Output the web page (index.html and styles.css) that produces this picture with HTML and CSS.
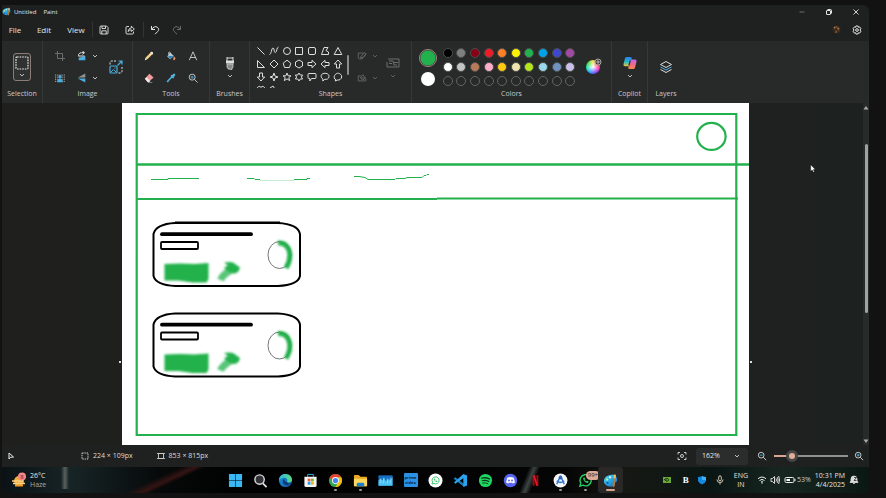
FILE: index.html
```
<!DOCTYPE html>
<html lang="en">
<head>
<meta charset="utf-8">
<title>Untitled - Paint</title>
<link rel="stylesheet" href="styles.css">
</head>
<body>
<svg class="defs" aria-hidden="true">
  <defs>
    <linearGradient id="palA" x1="0" y1="0" x2="1" y2="1"><stop offset="0" stop-color="#4fe0f5"/><stop offset=".5" stop-color="#28a7e6"/><stop offset="1" stop-color="#1767b8"/></linearGradient>
    <linearGradient id="edgeA" x1="0" y1="0" x2="1" y2="1"><stop offset="0" stop-color="#1c9be0"/><stop offset="1" stop-color="#0f56a8"/></linearGradient>
    <linearGradient id="edgeB" x1="0" y1="0" x2="1" y2="0"><stop offset="0" stop-color="#2bb7e8"/><stop offset="1" stop-color="#5fdc7c"/></linearGradient>
    <linearGradient id="copA" x1="0" y1="0" x2="0" y2="1"><stop offset="0" stop-color="#2c7df0"/><stop offset=".5" stop-color="#22b6c8"/><stop offset="1" stop-color="#e5c63b"/></linearGradient>
    <linearGradient id="copB" x1="0" y1="0" x2="0" y2="1"><stop offset="0" stop-color="#b46af2"/><stop offset=".5" stop-color="#f0668f"/><stop offset="1" stop-color="#f58a4b"/></linearGradient>
  </defs>
  <symbol id="chev" viewBox="0 0 6 4"><path d="M1 1l2 2 2-2" fill="none" stroke="currentColor" stroke-width=".8"/></symbol>
  <symbol id="paint" viewBox="0 0 16 16">
    <path d="M8 2C12 1 15.500 4 15 8c-.2 2-2 2-3.500 2-1 0-1 1-.8 2 .3 2-1 3-3 2.500C4 14 1 12 1 8.500 1 5 4 2.500 8 2z" fill="url(#palA)"/>
    <circle cx="4.500" cy="7" r="1.200" fill="#d6f56e"/><circle cx="7.500" cy="4.600" r="1.200" fill="#f4f6f8"/><circle cx="4.700" cy="10.500" r="1.200" fill="#1256a8"/>
    <path d="M11.500 5l2 .2-.6 6c0 2-.7 4-1.700 4s-1.200-2-.8-4z" fill="#a87943"/><path d="M11.300 1.500l2.500.4-.3 4h-2.200z" fill="#e9c36b"/>
  </symbol>
  <symbol id="minus" viewBox="0 0 12 12"><g fill="none" stroke="currentColor"><circle cx="5" cy="5" r="3.400" stroke-width="1"/><path d="M7.500 7.500L11 11"/><path d="M3.300 5h3.400" stroke="#4cc2ee"/></g></symbol>
  <symbol id="plus" viewBox="0 0 12 12"><g fill="none" stroke="currentColor"><circle cx="5" cy="5" r="3.400" stroke-width="1"/><path d="M7.500 7.500L11 11"/><path d="M3.300 5h3.400M5 3.300v3.400" stroke="#4cc2ee"/></g></symbol>
  <symbol id="whats" viewBox="0 0 16 16"><path d="M2 14l1-3.200A6 6 0 1 1 5.300 13z" fill="none" stroke="currentColor" stroke-width="1.500"/><path d="M5.500 5c-.5 2.500 3 6 5.300 5.500l.5-1.400-1.700-.9-.8.7c-.7-.3-1.400-1-1.700-1.800l.7-.7-.8-1.700z" fill="currentColor"/></symbol>
</svg>

<main class="window">
  <header class="titlebar">
    <svg class="app-icon"><use href="#paint"/></svg>
    <h1 class="app-title"><span>Untitled</span><span>Paint</span></h1>
    <div class="window-controls">
      <button aria-label="Minimize" class="dim"><svg viewBox="0 0 8 8"><path d="M1.500 4h5" stroke="currentColor"/></svg></button>
      <button aria-label="Restore"><svg viewBox="0 0 8 8" fill="none" stroke="currentColor"><rect x="1.500" y="2.500" width="4" height="4" rx=".5"/><path d="M2.500 1.500h3q1 0 1 1v3"/></svg></button>
      <button aria-label="Close"><svg viewBox="0 0 8 8" stroke="currentColor" stroke-width=".9"><path d="M1.500 1.500l5 5M6.500 1.500l-5 5"/></svg></button>
    </div>
  </header>

  <nav class="menubar" aria-label="Main menu">
    <button class="menu">File</button><button class="menu">Edit</button><button class="menu">View</button>
    <span class="rule"></span>
    <button class="quick" aria-label="Save"><svg viewBox="0 0 10 10" fill="none" stroke="currentColor" stroke-width=".9"><path d="M1 2q0-1 1-1h5.500L9 2.500V8q0 1-1 1H2Q1 9 1 8zM3 1v2.500h3.500V1M2.800 9V5.800h4.400V9"/></svg></button>
    <button class="quick share" aria-label="Share"><svg viewBox="0 0 10 10" fill="none" stroke="currentColor" stroke-width=".9"><path d="M4 1.500H2Q1 1.500 1 2.500V8q0 1 1 1h5.500q1 0 1-1V6.500"/><path d="M3 6.500Q3.500 3.200 6.300 3V1.200L9.300 4 6.300 6.500V4.800Q4.500 4.800 3 6.500z"/></svg></button>
    <span class="rule"></span>
    <button class="quick" aria-label="Undo"><svg viewBox="0 0 10 10" fill="none" stroke="currentColor"><path d="M1.500 1v3.500H5M1.700 4.300C3 2 5.500 1 7.300 2.200s1.700 3 .3 4.400L5 9.200"/></svg></button>
    <button class="quick redo dim" aria-label="Redo"><svg viewBox="0 0 10 10" fill="none" stroke="currentColor"><path d="M8.500 1v3.500H5M8.300 4.300C7 2 4.500 1 2.700 2.200s-1.700 3-.3 4.400L5 9.200"/></svg></button>
    <span class="spring"></span>
    <button class="account" aria-label="Account"><svg viewBox="0 0 10 10"><circle cx="5" cy="5" r="4.500" fill="#34271c"/><path d="M2 2h2v2H2zM6 3h2v2H6zM4 6h1v3H4z" fill="#a8794a"/><path d="M4 1h2v2H4zM6 6h2v1H6z" fill="#7c4a2e"/></svg></button>
    <button class="settings" aria-label="Settings"><svg viewBox="0 0 12 12" fill="none" stroke="currentColor" stroke-width="1.200"><path d="M4.700 1.200h2.600l.4 1.500 1.500-.4 1.500 2.200L9.600 6l1.100 1.500-1.500 2.200-1.500-.4-.4 1.500H4.700l-.4-1.500-1.500.4-1.500-2.200L2.400 6 1.300 4.500l1.500-2.200 1.500.4z"/><circle cx="6" cy="6" r="1.600"/></svg></button>
  </nav>

  <section class="ribbon" aria-label="Tools">
    <div class="group g-selection">
      <div class="content">
        <button class="select-tool" aria-label="Rectangular selection"><svg class="marquee" viewBox="0 0 14 14"><rect x="1" y="1" width="12" height="12" rx="1" fill="none" stroke="#eee" stroke-width="1.200" stroke-dasharray="1.600 1"/></svg><svg class="chev"><use href="#chev"/></svg></button>
      </div><span class="label">Selection</span>
    </div>
    <div class="group g-image">
      <div class="content">
        <div class="pairs">
          <button class="dim" aria-label="Crop"><svg viewBox="0 0 12 12" fill="none" stroke="currentColor" stroke-width="1.200"><path d="M3 0v9h9M0 3h9v9"/></svg></button>
          <button class="with-chev" aria-label="Rotate"><svg viewBox="0 0 12 12"><path d="M2 11V8l8-2v5z" fill="#4baee0"/><path d="M2 6.500V4Q3 2 5.500 2h3M6.500 0L9 2 6.500 4M2 6h7" fill="none" stroke="#ddd" stroke-width="1.200"/></svg><svg class="chev"><use href="#chev"/></svg></button>
          <button aria-label="Remove background"><svg viewBox="0 0 12 12"><path d="M0 2.500h12M0 5h12M0 7.500h12M0 10h12" stroke="#a9acab" stroke-width="1.200" stroke-dasharray="1.200 1"/><circle cx="6" cy="4.500" r="2" fill="#4baee0"/><path d="M2.500 11q.5-4 3.500-4t3.500 4z" fill="#4baee0"/></svg></button>
          <button class="with-chev" aria-label="Flip"><svg viewBox="0 0 12 12"><path d="M10 .5v5H1z" fill="#8f9392"/><path d="M10 11.500v-5H1z" fill="#4baee0"/></svg><svg class="chev"><use href="#chev"/></svg></button>
        </div>
        <button class="resize" aria-label="Resize"><svg viewBox="0 0 16 16" fill="none"><path d="M8 2H4Q2 2 2 4v2M14 8v4q0 2-2 2h-2" stroke="#ddd" stroke-dasharray="2 1.200"/><path d="M9.500 6.500L14 2M10.500 2H14v3.500" stroke="#4baee0" stroke-width="1.200"/><rect x="2" y="7" width="7" height="7" rx="1" stroke="#4baee0" stroke-width="1.200"/><path d="M3 13l2.500-2.500L8 13M6.500 9h1" stroke="#4baee0"/></svg></button>
      </div><span class="label">Image</span>
    </div>
    <div class="group g-tools">
      <div class="content tools">
        <button aria-label="Pencil"><svg viewBox="0 0 12 12"><path d="M1 11l.8-3L8.500 1.300q1-.8 2 .2t0 2L4 10z" fill="#f2d58c"/><path d="M8.500 1.300q1-.8 2 .2t0 2L9.700 4.400 7.600 2.200z" fill="#e8e5dc"/><path d="M1 11l.5-2L3 10.400z" fill="#ddd"/></svg></button>
        <button aria-label="Fill"><svg viewBox="0 0 12 12"><path d="M4.800 1.500L9.500 6 5 10 1.500 6.500z" fill="#a9c7d8"/><path d="M2.500 6h6.500L5 9.700z" fill="#2a86b8"/><path d="M3 4V1.800q1-1.500 2 0V5" fill="none" stroke="#ddd" stroke-width=".8"/><path d="M10 7q1.800 2.800 0 3.600T10 7z" fill="#ef9273" stroke="#ef9273"/></svg></button>
        <button aria-label="Text"><svg viewBox="0 0 12 12" fill="none" stroke="#ddd"><path d="M1.500 11L6 1l4.500 10M3 7.800h6"/></svg></button>
        <button aria-label="Eraser"><svg viewBox="0 0 12 12"><path d="M6.500 1l5 4.500L6 10.500H4.500L1 7z" fill="#f39a9d"/><path d="M1 7l2-2 4.500 4.500L6 11H4.500z" fill="#f0e9e8"/><path d="M5 11.500h5" stroke="#aaa" stroke-width=".8"/></svg></button>
        <button aria-label="Color picker"><svg viewBox="0 0 12 12"><path d="M7 4.800L2.500 9.300 1.600 11" stroke="#4baee0" stroke-width="2" fill="none"/><path d="M6 3l3 3" stroke="#9dcde4" stroke-width="1.500"/><path d="M7.500 4.500L9.700 2.300" stroke="#54add8" stroke-width="3" stroke-linecap="round"/></svg></button>
        <button aria-label="Magnifier"><svg viewBox="0 0 12 12" fill="none" stroke="#ddd"><circle cx="5" cy="5" r="3.600"/><path d="M7.600 7.600L11.500 11.500"/><circle cx="5" cy="5" r="1.800" fill="#4087ad" stroke="none"/></svg></button>
      </div><span class="label">Tools</span>
    </div>
    <div class="group g-brushes">
      <div class="content"><button class="stack" aria-label="Brushes"><svg class="big" viewBox="0 0 14 14"><path d="M4 1v4M10 1v4M4 2h6" stroke="#ddd"/><path d="M3 4.500h8v3H3z" fill="#ddd"/><path d="M4 8h6v3q0 1-1 1v1.500L5 13v-1q-1 0-1-1z" fill="#888" stroke="#ddd" stroke-width=".7"/></svg><svg class="chev"><use href="#chev"/></svg></button></div>
      <span class="label">Brushes</span>
    </div>
    <div class="group g-shapes">
      <div class="content">
        <div class="gallery">
          <button aria-label="Line"><svg viewBox="0 0 10 10"><path d="M1.500 1.500l7 7"/></svg></button>
          <button aria-label="Curve"><svg viewBox="0 0 10 10"><path d="M.5 8.500C2.500 8.500 2.300 2 4 2s.5 4.500 2.300 4.500S7.500 1 9.500 1"/></svg></button>
          <button aria-label="Oval"><svg viewBox="0 0 10 10"><circle cx="5" cy="5" r="3.500"/></svg></button>
          <button aria-label="Rectangle"><svg viewBox="0 0 10 10"><path d="M1.500 1.500h7v7h-7z"/></svg></button>
          <button aria-label="Rounded rectangle"><svg viewBox="0 0 10 10"><rect x="1.500" y="1.500" width="7" height="7" rx="1.500"/></svg></button>
          <button aria-label="Polygon"><svg viewBox="0 0 10 10"><path d="M4 1.500h4l-2 3 2.500 1.500v2.500h-7z"/></svg></button>
          <button aria-label="Triangle"><svg viewBox="0 0 10 10"><path d="M5 1.500l3.800 7H1.200z"/></svg></button>
          <button aria-label="Right triangle"><svg viewBox="0 0 10 10"><path d="M1.500 1.500v7h7z"/></svg></button>
          <button aria-label="Diamond"><svg viewBox="0 0 10 10"><path d="M5 1l4 4-4 4-4-4z"/></svg></button>
          <button aria-label="Pentagon"><svg viewBox="0 0 10 10"><path d="M5 1.200l3.800 3L7.500 8.500h-5L1.200 4.200z"/></svg></button>
          <button aria-label="Hexagon"><svg viewBox="0 0 10 10"><path d="M5 1l3.500 2v4L5 9 1.500 7V3z"/></svg></button>
          <button aria-label="Right arrow"><svg viewBox="0 0 10 10"><path d="M1 3.500h4V1.300L9 5 5 8.700V6.500H1z"/></svg></button>
          <button aria-label="Left arrow"><svg viewBox="0 0 10 10"><path d="M9 3.500H5V1.300L1 5l4 3.700V6.500h4z"/></svg></button>
          <button aria-label="Up arrow"><svg viewBox="0 0 10 10"><path d="M3.500 9V5H1.300L5 1l3.700 4H6.500v4z"/></svg></button>
          <button aria-label="Down arrow"><svg viewBox="0 0 10 10"><path d="M3.500 1v4H1.300L5 9l3.700-4H6.500V1z"/></svg></button>
          <button aria-label="Four-point star"><svg viewBox="0 0 10 10"><path d="M5 1l1 3 3 1-3 1-1 3-1-3-3-1 3-1z"/></svg></button>
          <button aria-label="Five-point star"><svg viewBox="0 0 10 10"><path d="M5 1l1.100 2.800H9L6.800 5.600l.9 3L5 6.900 2.300 8.600l.9-3L1 3.800h2.900z"/></svg></button>
          <button aria-label="Six-point star"><svg viewBox="0 0 10 10"><path d="M5 1l1.200 2H8.600L7.400 5l1.200 2H6.200L5 9 3.800 7H1.400l1.200-2-1.200-2h2.400z"/></svg></button>
          <button aria-label="Rounded callout"><svg viewBox="0 0 10 10"><path d="M2 1.500h6q1 0 1 1V5.500q0 1-1 1H4.500L2.800 9V6.500H2q-1 0-1-1v-3q0-1 1-1z"/></svg></button>
          <button aria-label="Oval callout"><svg viewBox="0 0 10 10"><path d="M3 7C.5 6 .5 2.500 3 1.600s6 0 6 2.700S6.500 7.700 4.800 7.300L2.800 9z"/></svg></button>
          <button aria-label="Cloud callout"><svg viewBox="0 0 10 10"><path d="M3 7.800C1 7 .8 5 1.600 3.500S4 1 5.500 1.300 9 3 8.700 5 6.500 8.400 4.700 8L2 9z"/></svg></button>
          <button aria-label="Heart"><svg viewBox="0 0 10 10"><path d="M5 9L1.500 5C0 2 4 0 5 2.500 6 0 10 2 8.500 5z"/></svg></button>
          <button aria-label="Lightning"><svg viewBox="0 0 10 10"><path d="M1 3l3-2 5 8-4-2z"/></svg></button>
        </div>
        <span class="gallery-scroll"></span>
        <div class="shape-style dim">
          <button class="with-chev" aria-label="Shape outline"><svg viewBox="0 0 12 12" fill="none" stroke="currentColor"><path d="M8 2.500H1.500V8q0 1.500 1.500 1.500h3L11 3.500M4 8l2-3 3.500-3L11 3.500 7 8z"/></svg><svg class="chev"><use href="#chev"/></svg></button>
          <button class="with-chev" aria-label="Shape fill"><svg viewBox="0 0 12 12" fill="none" stroke="currentColor"><path d="M1.500 9.500v-6h3M1.500 9.500h9v-3M4 6l3-4 3 4-3 2.500zM5 6h5"/></svg><svg class="chev"><use href="#chev"/></svg></button>
        </div>
        <button class="stack dim" aria-label="Size"><svg class="big" viewBox="0 0 14 14" fill="none" stroke="currentColor"><path d="M2 3h11v8H1V6M3 5h4M3 7.500h3M8 6.500h4M8 9h3M7 5l1 4"/></svg><svg class="chev"><use href="#chev"/></svg></button>
      </div><span class="label">Shapes</span>
    </div>
    <div class="group g-colors">
      <div class="content">
        <div class="current">
          <button class="primary" aria-label="Color 1"></button>
          <button class="secondary" aria-label="Color 2"></button>
        </div>
        <div class="palette">
          <button class="c-black" aria-label="Black"></button><button class="c-gray" aria-label="Gray"></button><button class="c-maroon" aria-label="Dark red"></button><button class="c-red" aria-label="Red"></button><button class="c-orange" aria-label="Orange"></button><button class="c-yellow" aria-label="Yellow"></button><button class="c-green" aria-label="Green"></button><button class="c-sky" aria-label="Turquoise"></button><button class="c-indigo" aria-label="Indigo"></button><button class="c-purple" aria-label="Purple"></button>
          <button class="c-white" aria-label="White"></button><button class="c-silver" aria-label="Light gray"></button><button class="c-brown" aria-label="Brown"></button><button class="c-rose" aria-label="Rose"></button><button class="c-gold" aria-label="Gold"></button><button class="c-cream" aria-label="Light yellow"></button><button class="c-lime" aria-label="Lime"></button><button class="c-aqua" aria-label="Light turquoise"></button><button class="c-steel" aria-label="Blue gray"></button><button class="c-lavender" aria-label="Lavender"></button>
          <button aria-label="Custom 1"></button><button aria-label="Custom 2"></button><button aria-label="Custom 3"></button><button aria-label="Custom 4"></button><button aria-label="Custom 5"></button><button aria-label="Custom 6"></button><button aria-label="Custom 7"></button><button aria-label="Custom 8"></button><button aria-label="Custom 9"></button><button aria-label="Custom 10"></button>
        </div>
        <button class="wheel" aria-label="Edit colors"><svg class="wheel-badge" viewBox="0 0 8 8"><circle cx="4" cy="4" r="3" fill="#303231" stroke="#aaa"/><path d="M2 4h4M4 2v4" stroke="#ccc" stroke-width=".8"/></svg></button>
      </div><span class="label">Colors</span>
    </div>
    <div class="group g-copilot">
      <div class="content"><button class="stack" aria-label="Copilot"><svg class="big" viewBox="0 0 14 14"><path d="M3.500 1h4q1.500 0 1.200 1.500L7 9q-.3 1.200-1.500 1.200H2Q0 10.200.5 8L2 2.200Q2.400 1 3.500 1z" fill="url(#copA)"/><path d="M8.500 3.500H12q2 0 1.500 2.300L12 11.500q-.4 1.500-1.700 1.500H6.500q-1.500 0-1.200-1.500L7 5q.4-1.500 1.500-1.500z" fill="url(#copB)"/><path d="M7.200 4.300L5.900 9.600" stroke="#282a29" stroke-width="1.200"/></svg><svg class="chev"><use href="#chev"/></svg></button></div>
      <span class="label">Copilot</span>
    </div>
    <div class="group g-layers">
      <div class="content"><button class="layers" aria-label="Layers"><svg viewBox="0 0 14 14" fill="none"><path d="M7 1.500l5.500 3L7 7.500l-5.500-3z" stroke="#ddd"/><path d="M1.500 7L7 10l5.500-3" stroke="#4baee0"/><path d="M1.500 9.500l5.500 3 5.500-3" stroke="#ddd"/></svg></button></div>
      <span class="label">Layers</span>
    </div>
  </section>

  <section class="workspace" aria-label="Canvas area">
    <div class="canvas">
      <svg class="drawing" viewBox="122 103 627 342" preserveAspectRatio="xMinYMin meet" role="img" aria-label="Page wireframe sketch">
        <defs>
          <filter id="soft" x="-30%" y="-30%" width="160%" height="160%"><feGaussianBlur stdDeviation=".8"/></filter>
          <g id="card">
            <path d="M175 223H278Q298 224 300 234V276Q298 285 278 286H175Q156 285 153.500 276V234Q156 224 175 223z" fill="none" stroke="#000" stroke-width="2"/>
            <path d="M162 234.200h89" stroke="#000" stroke-width="3.800" stroke-linecap="round"/>
            <rect x="161" y="242" width="37" height="7" rx="1" fill="none" stroke="#000" stroke-width="1.800"/>
            <g filter="url(#soft)">
              <path d="M164.500 264l15-.5 15 .5 14-1v16l-2 3.500h-14l-14-2h-14z" fill="#22b14c"/>
              <path d="M220.500 280Q223 274 233 269" fill="none" stroke="#22b14c" stroke-width="7" opacity=".75"/>
              <path d="M224 262.500q6-1 9 0l7 5q-1 6-7 6l-6-3-3-3 4-2z" fill="#22b14c"/>
            </g>
            <ellipse cx="279.500" cy="255" rx="11.500" ry="13.500" fill="none" stroke="#777" stroke-width="1"/>
            <path d="M278 243Q287 242 289.500 252Q291 260 286 268" fill="none" stroke="#22b14c" stroke-width="5" filter="url(#soft)"/>
          </g>
        </defs>
        <g fill="none" stroke="#22b14c">
          <path d="M136.700 114H736.300V435H136.700z" stroke-width="2.200"/>
          <path d="M137 164.600H749" stroke-width="2.500"/>
          <path d="M137 199H437M437 198.500H738" stroke-width="2.200"/>
          <ellipse cx="711.400" cy="136.400" rx="14.200" ry="13.500" stroke-width="2.200"/>
          <path d="M151 179.500h17v-1h31M247 178.500h7l1 1h5M294 179.500h13v-1h3M354 176.500h5l6 1 3 2h27l1-1h9l2-1h15l2-2h2l1-1h2"/>
          <path d="M260 180.500h34" opacity=".25"/>
        </g>
        <path d="M175 222.800H280" stroke="#000" stroke-width="2.600"/>
        <use href="#card"/><use href="#card" y="90.500"/>
      </svg>
      <span class="handle left"></span><span class="handle right"></span>
    </div>
    <div class="scrollbar"><svg viewBox="0 0 6 4"><path d="M3 0l2.500 3.500h-5z" fill="#aaa"/></svg><span class="scroll-thumb"></span><svg viewBox="0 0 6 4"><path d="M3 4L.5.500h5z" fill="#aaa"/></svg></div>
    <svg class="pointer" viewBox="0 0 6 9"><path d="M.7.700v6.500L2.200 6l1.200 2.300 1-.5L3.300 5.600h2z" fill="#fff" stroke="#111" stroke-width=".4"/></svg>
  </section>

  <footer class="statusbar">
    <svg class="st-pointer" viewBox="0 0 8 8"><path d="M2 1v6l1.500-1.700L6.500 5z" fill="none" stroke="#eee"/></svg>
    <span class="st-item st-selection"><svg viewBox="0 0 8 8"><path d="M1 1h6v6H1z" fill="none" stroke="#ccc" stroke-dasharray="1.500 .8"/></svg>224 × 109px</span>
    <span class="st-item"><svg viewBox="0 0 8 8"><path d="M1.500 1.500h5v5h-5zM0 1.500h8M0 6.500h8" fill="none" stroke="#ccc" stroke-width=".9"/></svg>853 × 815px</span>
    <span class="spring"></span>
    <button class="fit" aria-label="Fit to window"><svg viewBox="0 0 10 8" fill="none" stroke="#ddd" stroke-width=".9"><path d="M3 .5H1V2.500M7 .5h2V2.500M3 7.500H1V5.500M7 7.500h2V5.500"/><circle cx="5" cy="4" r="1.500"/></svg></button>
    <label class="zoom-select"><select aria-label="Zoom level"><option>162%</option><option>100%</option></select><svg class="chev"><use href="#chev"/></svg></label>
    <button class="zoom-btn" aria-label="Zoom out"><svg><use href="#minus"/></svg></button>
    <input class="zoom-range" type="range" min="0" max="100" value="19" aria-label="Zoom">
    <button class="zoom-btn" aria-label="Zoom in"><svg><use href="#plus"/></svg></button>
  </footer>

  <nav class="taskbar" aria-label="Taskbar">
    <button class="weather"><svg viewBox="0 0 14 16"><circle cx="7" cy="9" r="5" fill="#f2ac35"/><path d="M0 9h11M1 11.500h12" stroke="#f7d28a" stroke-width="1.500"/><path d="M3 13.500h8" stroke="#ef9b28" stroke-width="2"/><circle cx="10" cy="4.500" r="4" fill="#f2878b"/><text x="10" y="7" class="badge-num">8</text></svg><span class="weather-text"><span>26°C</span><span class="muted">Haze</span></span></button>
    <div class="apps">
      <button aria-label="Start"><svg viewBox="0 0 16 16"><path d="M1 1h6.700v6.700H1zM8.300 1H15v6.700H8.300zM1 8.300h6.700V15H1zM8.300 8.300H15V15H8.300z" fill="#39b8f3"/></svg></button>
      <button aria-label="Search"><svg viewBox="0 0 16 16"><path d="M10.500 11l4 4" stroke="#ddd" stroke-width="2"/><circle cx="7" cy="7" r="5" fill="#303236" stroke="#ddd" stroke-width="1.500"/></svg></button>
      <button aria-label="Edge"><svg viewBox="0 0 16 16"><circle cx="8" cy="8" r="7" fill="url(#edgeA)"/><path d="M1 8C1 3 5 1 8 1c4 0 7 3 7 6.500 0 2.500-4 3.500-5.500 2C11 7 9 5 6.500 5 4 5 2 6 1 8z" fill="url(#edgeB)"/><path d="M9.500 9.500C7 9 6 7 7 5.500 4 7 4.500 12 9 13q3.500 0 5-2-2.500.5-4.500-1.500z" fill="#0e3c76"/></svg></button>
      <button aria-label="Microsoft Store"><svg viewBox="0 0 16 16"><path d="M5 4V1.500h6V4" fill="none" stroke="#42aee5"/><path d="M1.500 4h13v9q0 2-2 2h-9q-2 0-2-2z" fill="#f5f5f5"/><path d="M5 6h3v3H5z" fill="#ef5a3a"/><path d="M8.500 6h3v3h-3z" fill="#75b928"/><path d="M5 9.500h3v3H5z" fill="#21a3e8"/><path d="M8.500 9.500h3v3h-3z" fill="#f6b51e"/></svg></button>
      <button class="open" aria-label="Chrome"><svg viewBox="0 0 16 16"><circle cx="8" cy="8" r="7" fill="#34a853"/><path d="M1.900 4.600A7 7 0 0 1 14.100 4.600H8L5 9.700z" fill="#ea4335"/><path d="M14.100 4.600A7 7 0 0 1 8 15l3-5.300V4.600z" fill="#fbbc05"/><circle cx="8" cy="8" r="3.700" fill="#fff"/><circle cx="8" cy="8" r="2.800" fill="#4285f4"/></svg></button>
      <button class="open" aria-label="File Explorer"><svg viewBox="0 0 16 16"><path d="M1 3q0-1 1-1h4l2 2h6q1 0 1 1v9H1z" fill="#e9a91f"/><path d="M1 6h14v7q0 1-1 1H2q-1 0-1-1z" fill="#ffd65c"/><path d="M4 14v-2q0-1.500 1.500-1.500h5q1.500 0 1.500 1.500v2z" fill="#1780cf"/></svg></button>
      <button aria-label="Resource monitor"><svg viewBox="0 0 16 16"><path d="M.5 2.500h15v11H.5z" fill="#176fc0"/><path d="M.5 13.500V8l2-2 2 2 2-3 2 4 2-3 2 2 3-4v9.500z" fill="#4bc2f2"/><path d="M3 6v5M6 5v6M10 6v5M13 5v6" stroke="#b7e8fa" stroke-width=".6"/></svg></button>
      <button aria-label="Prime Video"><span class="prime"><span>prime</span><span>video</span></span></button>
      <button aria-label="WhatsApp Web"><svg viewBox="0 0 16 16"><circle cx="8" cy="8" r="7.500" fill="#fff"/><use href="#whats" x="3" y="3" width="10" height="10" color="#26c15b"/></svg></button>
      <button aria-label="Visual Studio Code"><svg viewBox="0 0 16 16"><path d="M1 5.500L2.500 4.500 12 12V15L1 6.500z" fill="#1480ca"/><path d="M1 10l10-9 4 1.700v10.600L11 15V5.500L2.500 11.500z" fill="#2aa3ec"/></svg></button>
      <button aria-label="Spotify"><svg viewBox="0 0 16 16" fill="none" stroke="#10391f" stroke-linecap="round"><circle cx="8" cy="8" r="7" fill="#1ed760" stroke="none"/><path d="M4 5.500q4.500-1.200 8.200.8" stroke-width="1.500"/><path d="M4.500 8.200q3.800-1 7 .8" stroke-width="1.200"/><path d="M5 10.700q3-.7 5.500.7"/></svg></button>
      <button aria-label="Discord"><svg viewBox="0 0 16 16"><circle cx="8" cy="8" r="7.200" fill="#5865f2"/><path d="M4.500 5q3.500-1.500 7 0l1.300 5-2.300 1.300-.7-1H6.200l-.7 1L3.200 10z" fill="#fff"/><circle cx="6.400" cy="8" r="1" fill="#5865f2"/><circle cx="9.600" cy="8" r="1" fill="#5865f2"/></svg></button>
      <button aria-label="Netflix"><svg viewBox="0 0 16 16"><path d="M5 2.500h2v11H5zM9 2.500h2v11H9z" fill="#a80710"/><path d="M5 2.500h2.200l3.800 11H8.800z" fill="#e31521"/></svg></button>
      <button class="open" aria-label="Android Studio"><svg viewBox="0 0 16 16"><circle cx="8" cy="8" r="7.400" fill="#f4f6f7"/><path d="M8 3L4 12M8 3l4 9M4 8.500q4 3 8 0" fill="none" stroke="#3979d6" stroke-width="1.600"/><circle cx="8" cy="5" r="2" fill="#2c65c0"/></svg></button>
      <button class="open" aria-label="WhatsApp, 99+ messages"><svg color="#29cf64"><use href="#whats"/></svg><span class="badge">99+</span></button>
      <button class="open active" aria-label="Paint"><svg><use href="#paint"/></svg></button>
    </div>
    <div class="tray">
      <svg class="t-nvidia" viewBox="0 0 8 8"><path d="M0 1h8v6H0z" fill="#69a936"/><path d="M1 4q3-3.500 5 0-2.500 3-4 0h2" fill="none" stroke="#1c3310" stroke-width=".9"/></svg>
      <span class="t-b">B</span>
      <svg class="t-defender" viewBox="0 0 10 10"><path d="M1 2q3 0 4-1 1 1 4 1v4Q8 8 5 9.500 2 8 1 6z" fill="#1688e0"/><path d="M5 1q1 1 4 1v3H5z" fill="#3eb3f7"/></svg>
      <svg class="t-mic" viewBox="0 0 10 10" fill="none" stroke="#d5c4b5"><rect x="3.700" y=".8" width="2.600" height="5" rx="1.300"/><path d="M2 4.500q0 3 3 3t3-3M5 7.500V9.500"/></svg>
      <span class="lang"><span>ENG</span><span>IN</span></span>
      <svg class="t-wifi" viewBox="0 0 10 10" fill="none" stroke="#eee"><path d="M1 3.800q4-3.600 8 0M2.500 5.500q2.500-2.200 5 0M4 7q1-.8 2 0"/><circle cx="5" cy="8" r=".7" fill="#eee" stroke="none"/></svg>
      <svg class="t-sound" viewBox="0 0 10 10" fill="none" stroke="#eee" stroke-width=".9"><path d="M1 3.500h1.500l2-2v7l-2-2H1zM6 3.500q1 1.500 0 3M7.300 2.200q1.700 2.800 0 5.600M8.600 1q2 4 0 8"/></svg>
      <svg class="t-battery" viewBox="0 0 12 8"><rect x="1" y="1.500" width="9" height="5" rx="1.300" fill="none" stroke="#eee"/><path d="M2.500 3h3.500v2H2.500z" fill="#fff"/><path d="M11 3v2" stroke="#eee"/></svg>
      <span class="percent">53%</span>
      <span class="clock"><span>10:31 PM</span><span>4/4/2025</span></span>
      <svg class="t-bell" viewBox="0 0 10 10"><path d="M1 7.500l1-1.500V4q0-3 3-3t3 3v2l1 1.500zM4 8.500h2" fill="#ddd" stroke="#ddd" stroke-width=".8"/><path d="M5 2.500h2.500L5 5.500h2.500" fill="none" stroke="#222" stroke-width=".8"/></svg>
    </div>
  </nav>
</main>
</body>
</html>
```
FILE: styles.css
```
* { box-sizing: border-box; }

body {
  margin: 0;
  min-height: 100vh;
  display: flex;
  padding: 5px 17px 5px 2px;
  background: #121212;
  color: #e4e4e4;
  font: 7px/10px "Open Sans", "Noto Sans", sans-serif;
}

.defs { position: absolute; width: 0; height: 0; }

button {
  display: flex;
  align-items: center;
  justify-content: center;
  padding: 0;
  border: 0;
  background: none;
  color: inherit;
  font: inherit;
}

svg { display: block; flex: none; }
.chev { width: 6px; height: 4px; }
.dim { color: #6c6e6d; }
.spring { flex: 1; }

.window {
  flex: 1;
  min-width: 0;
  display: flex;
  flex-direction: column;
  overflow: hidden;
  border-radius: 0 6px 6px 6px;
  background: #1e2120;
}

/* Title and menu rows */
.titlebar { display: flex; align-items: center; height: 13px; }
.app-icon { width: 9px; height: 9px; }
.app-title { display: flex; gap: 7px; margin: 0 0 0 3px; font: inherit; font-size: 6px; }
.window-controls { display: flex; margin-left: auto; }
.window-controls button { width: 27px; height: 13px; }
.window-controls svg { width: 8px; height: 8px; }

.menubar { display: flex; align-items: center; height: 23px; padding-right: 7px; }
.menu { width: 32px; height: 20px; }
.menubar .menu { font-size: 8px; }
.menu:first-child { width: 26px; }
.rule { width: 1px; height: 15px; background: #343635; }
.quick { width: 22px; height: 20px; }
.quick svg { width: 10px; height: 10px; }
.share { margin: 0 2px 0 4px; }
.account svg { width: 9px; height: 9px; }
.settings { width: 21px; justify-content: flex-end; }
.settings svg { width: 10px; height: 10px; }

/* Ribbon */
.ribbon { display: flex; height: 62px; background: #282a29; }
.group {
  display: flex;
  flex-direction: column;
  flex: none;
  padding: 6px 0 2px;
  border-right: 1px solid #363837;
}
.group:last-child { border-right: 0; }
.content { flex: 1; min-height: 0; display: flex; align-items: center; justify-content: center; }
.label { line-height: 14px; text-align: center; color: #c9c9c9; }
.g-selection { width: 41px; }
.g-image { width: 90px; }
.g-tools { width: 77px; }
.g-brushes { width: 40px; }
.g-shapes { width: 162px; }
.g-colors { width: 200px; }
.g-copilot, .g-layers { width: 36px; }

.select-tool {
  flex-direction: column;
  justify-content: space-between;
  width: 18px;
  height: 28px;
  padding: 2px 0 3px;
  border: 1px solid #8b7d76;
  border-radius: 3px;
  background: #303231;
}
.marquee { width: 14px; height: 14px; }

.pairs { display: grid; grid-template-columns: 18px 28px; gap: 12px 4px; }
.pairs svg:first-child, .shape-style svg:first-child { width: 10px; height: 10px; }
.with-chev { gap: 5px; }
.resize { margin-left: 7px; }
.resize svg { width: 16px; height: 16px; }
.tools { display: grid; grid-template-columns: repeat(3, 22px); gap: 12px 0; align-content: center; }
.tools svg { width: 10px; height: 10px; }
.stack { flex-direction: column; gap: 4px; }
.big { width: 14px; height: 14px; }
.layers svg { width: 14px; height: 14px; }

.g-shapes .content { justify-content: flex-start; padding-left: 5px; }
.gallery {
  display: grid;
  grid-template-columns: repeat(7, 1fr);
  grid-auto-rows: 10px;
  gap: 3px 0;
  width: 89px;
  height: 42px;
  overflow: hidden;
}
.gallery svg { width: 10px; height: 10px; fill: none; stroke: #ddd; stroke-width: 1; }
.gallery-scroll { width: 2px; height: 20px; margin: 0 8px 4px 3px; border-radius: 1px; background: #8a8c8b; }
.shape-style { display: flex; flex-direction: column; gap: 12px; margin-right: 8px; }

.g-colors .content { justify-content: flex-start; padding-left: 7px; }
.current { display: flex; flex-direction: column; align-items: center; gap: 5px; width: 18px; }
.primary {
  width: 18px;
  height: 18px;
  border: 1px solid #a28c83;
  border-radius: 50%;
  background: radial-gradient(circle, #22b14c 0 7px, #282a29 8px);
}
.secondary { width: 14px; height: 14px; border-radius: 50%; background: #fff; }
.palette {
  display: grid;
  grid-template-columns: repeat(10, 1fr);
  gap: 4px 0;
  width: 136px;
  margin: 0 0 1px 4px;
  justify-items: center;
}
.palette button { width: 10px; height: 10px; border: 1px solid #626463; border-radius: 50%; }
.palette [class^="c-"] { border-color: #4a4c4b; }
.palette .c-black { background: #000; }
.palette .c-gray { background: #7f7f7f; }
.palette .c-maroon { background: #880015; }
.palette .c-red { background: #ed1c24; }
.palette .c-orange { background: #ff7f27; }
.palette .c-yellow { background: #fff200; }
.palette .c-green { background: #22b14c; }
.palette .c-sky { background: #00a2e8; }
.palette .c-indigo { background: #3f48cc; }
.palette .c-purple { background: #a349a4; }
.palette .c-white { background: #fff; }
.palette .c-silver { background: #c3c3c3; }
.palette .c-brown { background: #b97a57; }
.palette .c-rose { background: #ffaec9; }
.palette .c-gold { background: #ffc90e; }
.palette .c-cream { background: #efe4b0; }
.palette .c-lime { background: #b5e61d; }
.palette .c-aqua { background: #99d9ea; }
.palette .c-steel { background: #7092be; }
.palette .c-lavender { background: #c8bfe7; }
.wheel {
  position: relative;
  width: 14px;
  height: 14px;
  margin-left: 9px;
  border-radius: 50%;
  background: radial-gradient(circle, #fff, transparent 65%), conic-gradient(#f4e04d, #ff5a3c, #ff2bb0, #7a3cff, #2a8cff, #20e0c0, #3ce04a, #f4e04d);
}
.wheel-badge { position: absolute; top: -2px; right: -2px; width: 8px; height: 8px; }

/* Drawing area */
.workspace {
  position: relative;
  flex: 1;
  display: grid;
  grid-template-columns: 120px minmax(0, 1fr) 114px 6px;
  background: linear-gradient(90deg, #1f201e, #1d2120);
}
.canvas { position: relative; grid-column: 2; background: #fff; }
.drawing { width: 100%; }
.handle { position: absolute; top: 258px; width: 2px; height: 2px; background: #ddd; }
.handle.left { left: -3px; }
.handle.right { right: -3px; }
.scrollbar {
  grid-column: 4;
  display: flex;
  flex-direction: column;
  align-items: center;
  padding: 3px 0 2px;
  background: #292b2a;
}
.scrollbar svg { width: 6px; height: 4px; }
.scroll-thumb { width: 3px; height: 50%; margin: 34px 0 auto; border-radius: 2px; background: #a0a2a1; }
.pointer { position: absolute; top: 61px; right: 53px; width: 6px; height: 9px; }

/* Status bar */
.statusbar { display: flex; align-items: center; height: 22px; padding: 0 5px; }
.st-pointer { width: 8px; height: 8px; }
.st-item { display: flex; align-items: center; gap: 4px; color: #ddd; }
.st-item svg { width: 8px; height: 8px; }
.st-selection { margin: 0 24px 0 66px; }
.fit svg { width: 10px; height: 8px; }
.zoom-select {
  display: flex;
  align-items: center;
  width: 52px;
  height: 17px;
  margin: 0 9px;
  padding-right: 8px;
  border-radius: 3px;
  background: #2b2d2c;
}
.zoom-select select {
  flex: 1;
  min-width: 0;
  padding: 0 0 0 6px;
  border: 0;
  appearance: none;
  background: none;
  color: inherit;
  font: inherit;
}
.zoom-btn svg { width: 10px; height: 10px; }
.zoom-range {
  width: 74px;
  height: 14px;
  margin: 0 6px 0 7px;
  appearance: none;
  background: linear-gradient(90deg, #d9a78f 0 22%, #8f9190 22%) center / 100% 2px no-repeat;
}
.zoom-range::-webkit-slider-thumb {
  width: 12px;
  height: 12px;
  appearance: none;
  border: 3px solid #454746;
  border-radius: 50%;
  background: #e0ae97;
}

/* Taskbar */
.taskbar {
  display: grid;
  grid-template-columns: 221px auto 1fr;
  align-items: center;
  height: 26px;
  background:
    linear-gradient(112deg, transparent 30%, #3c4444 34%, transparent 38%) 485px 0 / 130px 26px no-repeat,
    linear-gradient(90deg, transparent, #59615c, transparent) 59px 0 / 8px 22px no-repeat,
    linear-gradient(155deg, transparent 40%, #351414 48%, transparent 53%) 100px 0 / 140px 26px no-repeat,
    linear-gradient(90deg, #0a1215, #172426 8%, #070a0a 18%, #000 28%, #050505 65%, #161813 72%, #0a1614 82%, #172620 90%, #0b1713);
}
.weather { gap: 4px; justify-self: start; margin-left: 10px; text-align: left; }
.weather svg { width: 14px; height: 16px; }
.badge-num { fill: #542023; font-size: 6px; text-anchor: middle; }
.weather-text, .lang, .clock { display: flex; flex-direction: column; line-height: 9px; }
.muted { color: #aaa; }
.apps { display: flex; height: 26px; }
.apps button { position: relative; width: 25px; height: 26px; }
.apps svg { width: 15px; height: 15px; }
.apps .open::after {
  content: "";
  position: absolute;
  bottom: 2px;
  left: 11px;
  width: 3px;
  height: 2px;
  border-radius: 1px;
  background: #999;
}
.apps .active { border-radius: 3px; background: #292827; }
.apps .active::after { left: 8px; width: 9px; background: #d9a78f; }
.badge {
  position: absolute;
  top: 4px;
  right: -2px;
  padding: 0 2px;
  border-radius: 5px;
  background: #dbaa96;
  color: #2a1914;
  font-size: 6px;
  line-height: 9px;
}
.prime {
  width: 14px;
  height: 14px;
  display: flex;
  flex-direction: column;
  justify-content: center;
  border-radius: 1px;
  background: #2a91e4;
  color: #06223d;
  font-size: 4px;
  font-weight: 700;
  line-height: 5px;
}
.tray { display: flex; align-items: center; justify-self: end; margin-right: 10px; }
.tray svg { width: 10px; height: 10px; }
.tray .t-nvidia { width: 8px; height: 8px; }
.t-b { margin: 0 8px 0 12px; font: 700 9px/10px "Liberation Serif", serif; color: #fff; }
.tray .t-mic { margin: 0 9px 0 8px; }
.lang { align-items: center; margin-right: 9px; }
.tray .t-wifi { margin-right: 3px; }
.tray .t-battery { width: 12px; margin: 0 1px 0 4px; }
.percent { color: #ccc; }
.clock { align-items: flex-end; margin: 0 4px 0 4px; }
```
